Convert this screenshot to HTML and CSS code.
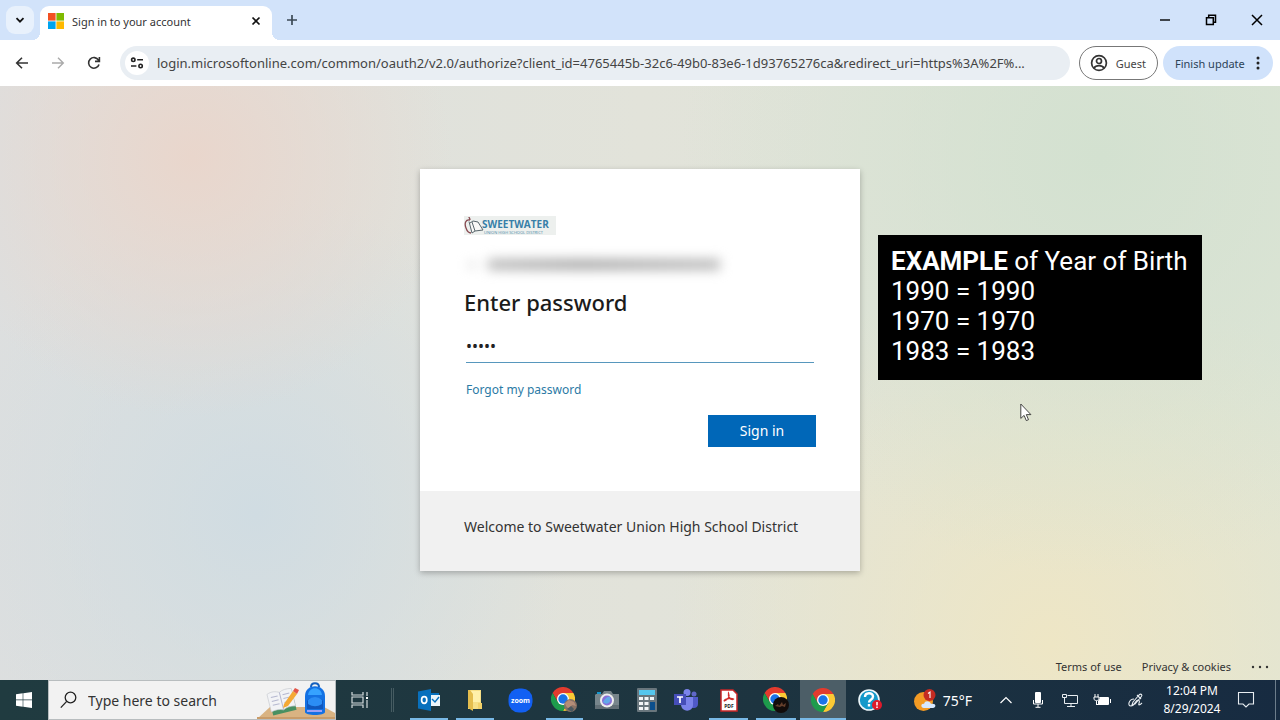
FILE: index.html
```html
<!DOCTYPE html>
<html lang="en">
<head>
<meta charset="utf-8">
<meta name="viewport" content="width=device-width, initial-scale=1">
<title>Sign in to your account</title>
<link rel="stylesheet" href="styles.css">
</head>
<body>
<svg class="defs" aria-hidden="true">
  <symbol id="chrome" viewBox="0 0 24 24">
    <path fill="#e33b2e" d="M1.6 6A12 12 0 0 1 22.4 6H12L6.8 15Z"/>
    <path fill="#fcc934" d="M22.4 6A12 12 0 0 1 12 24L17.2 15 12 6Z"/>
    <path fill="#1e9b4c" d="M12 24A12 12 0 0 1 1.6 6L6.8 15H17.2Z"/>
    <circle cx="12" cy="12" r="6" fill="#fff"/>
    <circle cx="12" cy="12" r="4.7" fill="#1a73e8"/>
  </symbol>
</svg>

<header class="tabstrip">
  <button class="tab-search" aria-label="Search tabs"><svg width="10" height="10" viewBox="0 0 10 10"><path d="M1.5 3.2 5 6.7l3.5-3.5" fill="none" stroke="#111" stroke-width="1.8"/></svg></button>
  <div class="tab">
    <svg width="16" height="16" viewBox="0 0 16 16"><path fill="#f25022" d="M0 0h7.6v7.6H0z"/><path fill="#7fba00" d="M8.4 0H16v7.6H8.4z"/><path fill="#00a4ef" d="M0 8.4h7.6V16H0z"/><path fill="#ffb900" d="M8.4 8.4H16V16H8.4z"/></svg>
    <span class="tab-title">Sign in to your account</span>
    <button class="plain" aria-label="Close tab"><svg width="10" height="10" viewBox="0 0 10 10"><path d="M1.5 1.5l7 7m0-7l-7 7" stroke="#111" stroke-width="1.7"/></svg></button>
  </div>
  <button class="plain new-tab" aria-label="New tab"><svg width="12" height="12" viewBox="0 0 12 12"><path d="M6 1v10M1 6h10" stroke="#3c4a55" stroke-width="1.7"/></svg></button>
  <div class="window-controls">
    <button class="plain" aria-label="Minimize"><svg width="12" height="12" viewBox="0 0 12 12"><path d="M1 6h10" stroke="#000" stroke-width="1.4"/></svg></button>
    <button class="plain" aria-label="Restore"><svg width="12" height="12" viewBox="0 0 12 12"><path d="M1.5 3.7h6.8v6.8H1.5zM3.7 3.7V1.3h6.8v6.9H8.3" fill="none" stroke="#000" stroke-width="1.5"/></svg></button>
    <button class="plain" aria-label="Close"><svg width="12" height="12" viewBox="0 0 12 12"><path d="M1 1l10 10m0-10L1 11" stroke="#000" stroke-width="1.5"/></svg></button>
  </div>
</header>

<nav class="toolbar">
  <button class="plain nav-btn" aria-label="Back"><svg width="14" height="14" viewBox="0 0 14 14"><path d="M13 7H2M7 1.7 1.7 7 7 12.3" fill="none" stroke="#333" stroke-width="1.6"/></svg></button>
  <button class="plain nav-btn" aria-label="Forward"><svg width="14" height="14" viewBox="0 0 14 14"><path d="M1 7h11M7 1.7 12.3 7 7 12.3" fill="none" stroke="#aaa" stroke-width="1.4"/></svg></button>
  <button class="plain nav-btn" aria-label="Reload"><svg width="14" height="14" viewBox="0 0 14 14"><path d="M12 8.4A5.3 5.3 0 1 1 11.5 4.2M12.4 1v4.4H8" fill="none" stroke="#333" stroke-width="1.6"/></svg></button>
  <div class="omnibox">
    <button class="site-info" aria-label="View site information"><svg width="14" height="14" viewBox="0 0 14 14"><g fill="none" stroke="#222" stroke-width="1.6"><circle cx="3.3" cy="3.8" r="1.7"/><path d="M7.2 3.8H13M1 10h5.4"/><circle cx="10.6" cy="10" r="1.7"/></g></svg></button>
    <input class="address" type="text" aria-label="Address" value="login.microsoftonline.com/common/oauth2/v2.0/authorize?client_id=4765445b-32c6-49b0-83e6-1d93765276ca&amp;redirect_uri=https%3A%2F%...">
  </div>
  <button class="pill guest"><svg width="18" height="18" viewBox="0 0 18 18"><g fill="none" stroke="#333" stroke-width="1.7"><circle cx="9" cy="9" r="7.4"/><circle cx="9" cy="7" r="2.5"/><path d="M4 14c2-3.2 8-3.2 10 0"/></g></svg>Guest</button>
  <button class="pill update">Finish update<svg width="4" height="14" viewBox="0 0 4 14"><g fill="#222"><circle cx="2" cy="2" r="1.5"/><circle cx="2" cy="7" r="1.5"/><circle cx="2" cy="12" r="1.5"/></g></svg></button>
</nav>

<main class="page">
  <section class="stage">
    <div class="card">
      <form class="card-body">
        <svg class="brand" width="92" height="19" viewBox="0 0 92 19" role="img" aria-label="Sweetwater Union High School District">
          <path fill="#edf0ee" d="M0 0h92v19H0z"/>
          <path d="M6 4C2 3 0 7 2 12c1 3 3 5 5 5M6 4c0-2-1-2-1-3" fill="none" stroke="#874950" stroke-width="1.3"/>
          <path d="M5 5.500 8 17l3-2 8-1L14 6 9 5 6 7M8 6l3 9" fill="#f8f8f6" stroke="#59666c" stroke-width="1"/>
          <text class="brand-name" x="18" y="12">SWEETWATER</text>
          <text class="brand-sub" x="20" y="18">UNION HIGH SCHOOL DISTRICT</text>
        </svg>
        <div class="account"><span class="account-back"></span><span class="account-name"></span></div>
        <h1><label for="pwd">Enter password</label></h1>
        <input id="pwd" class="password" type="password" value="12345">
        <a class="forgot" href="#">Forgot my password</a>
        <button class="signin" type="submit">Sign in</button>
      </form>
      <div class="card-foot">Welcome to Sweetwater Union High School District</div>
    </div>
  </section>
  <footer class="legal">
    <a href="#">Terms of use</a>
    <a href="#">Privacy &amp; cookies</a>
    <button class="plain" aria-label="More options"><svg width="18" height="4" viewBox="0 0 18 4"><g fill="#333"><circle cx="2" cy="2" r="1.2"/><circle cx="9" cy="2" r="1.2"/><circle cx="16" cy="2" r="1.2"/></g></svg></button>
  </footer>
  <aside class="callout">
    <p><strong>EXAMPLE</strong> of Year of Birth</p>
    <p>1990 = 1990</p>
    <p>1970 = 1970</p>
    <p>1983 = 1983</p>
  </aside>
  <svg class="pointer" width="12" height="19" viewBox="0 0 12 19" aria-hidden="true"><path d="M.8 1v14.4l3.3-3 2.2 5.2 2.2-.9-2.2-5.1h4.6z" fill="#fff" stroke="#333" stroke-width=".9"/></svg>
</main>

<div class="taskbar">
  <button class="plain start" aria-label="Start"><svg width="16" height="16" viewBox="0 0 16 16"><path fill="#fff" d="M0 2.2 6.7 1.3v6.3H0zM7.3 1.2 16 0v7.6H7.3zM0 8.2h6.7v6.5L0 13.8zM7.3 8.2H16V16l-8.7-1.2z"/></svg></button>
  <div class="search">
    <svg width="17" height="18" viewBox="0 0 17 18"><g fill="none" stroke="#222" stroke-width="1.3"><circle cx="10.5" cy="6.5" r="5.3"/><path d="M6.7 10.4.8 16.6"/></g></svg>
    <input type="text" placeholder="Type here to search" aria-label="Type here to search">
    <svg width="78" height="37" viewBox="0 0 78 37" aria-hidden="true">
      <path fill="#d9b382" d="M0 37 13 25h54l11 6v6z"/><path fill="#c99c69" d="M0 35h78v2H0z"/>
      <g transform="rotate(-14 25 19)"><path fill="#489061" d="M13 13h24v18H13z"/><path fill="#f2f3f6" stroke="#c5c8ce" stroke-width=".6" d="M12 9c5-2 9-1 12.500 1C28 8 32 8 37 9v18c-5-1-9-1-12.500 1-4-2-8-2-12.500-1z"/><path d="M24.500 10v18M15 13h7m-7 4h7m-7 4h7m5-8h7m-7 4h7m-7 4h7" stroke="#b5b8d0" stroke-width="1"/></g>
      <path fill="#f4a935" d="m27 22 9-13 4 3-9 12-5 2z"/><path fill="#e25549" d="m36 9 2-3 4 2-2 4z"/>
      <path d="M54 5c0-5 8-5 8 0" fill="none" stroke="#1760bd" stroke-width="2"/>
      <path fill="#1471e3" d="M48 14C48 1 68 1 68 14v16c0 4-20 4-20 0z"/><path fill="#36a2ff" d="M51 13c1-9 13-9 14 0z"/><path fill="#1057bd" d="M50 19c4-5 12-5 16 0v8H50z"/><path fill="#2b8df5" d="M51 18c4-4 10-4 14 0v4c-5 3-9 3-14 0z"/><path d="M50 29h15" stroke="#c8b1ff" stroke-width="1.500"/>
    </svg>
  </div>
  <button class="plain taskview" aria-label="Task view"><svg width="18" height="16" viewBox="0 0 18 16"><path d="M1 0v3h11V0M1 5h11v6H1zM1 16v-3h11v3M16 0v4M16 8v8" fill="none" stroke="#d5dcde" stroke-width="1.200"/><path d="M15 5h2v2h-2z" fill="#fff"/></svg></button>
  <span class="divider"></span>
  <div class="apps">
    <button class="app open" aria-label="Outlook"><svg width="22" height="22" viewBox="0 0 22 22"><path fill="#edf5fa" d="M11 6h11v11H11z"/><path fill="#0870bd" d="m0 2.500 13-2.500v22L0 19.500zM12 4h9v2h-9z"/><ellipse cx="6.200" cy="11" rx="2.600" ry="3.300" fill="none" stroke="#fff" stroke-width="1.700"/><path d="m14 10 3 3 4-5" fill="none" stroke="#0870bd" stroke-width="1.400"/></svg></button>
    <button class="app open" aria-label="File Explorer"><svg width="22" height="22" viewBox="0 0 22 22"><path fill="#f6df86" d="M4 1h13v19H4z"/><path fill="#fff0a9" d="M6 2h10v11H6z"/><path fill="#e4bd4d" d="M4 1h2l3 4v17l-5-3z"/><path fill="#f2d169" d="M14 14h4v6h-4z"/></svg></button>
    <button class="app" aria-label="Zoom"><svg width="25" height="25" viewBox="0 0 25 25"><rect x=".5" y=".5" width="24" height="24" rx="10.500" fill="#1260f3"/><text class="zoom-text" x="12.500" y="15" text-anchor="middle">zoom</text></svg></button>
    <button class="app open" aria-label="Chrome, first profile"><svg width="27" height="26" viewBox="0 0 27 26"><use href="#chrome" width="24" height="24"/><circle cx="19.500" cy="18.500" r="6.500" fill="#887265"/><path d="m14 16 4-3 5 2 2 4-4-1-3 4-3-3z" fill="#b48d78"/><path d="m16 22 4-3 3 3-2 3z" fill="#4b5960"/></svg></button>
    <button class="app" aria-label="Camera"><svg width="24" height="20" viewBox="0 0 24 20"><path fill="#77858b" d="M1 4h6l2-3h7l2 3h6v15H0V5z"/><path fill="#626f76" d="M0 15h24v4H0z"/><path fill="#1496ce" d="M2 2h4v2H2z"/><circle cx="12" cy="10.500" r="7" fill="#eee"/><circle cx="12" cy="10.500" r="5" fill="#8870d7"/><path d="M8 12c2-4 5-6 7-5 2 5-3 9-7 5z" fill="#62a9e9"/></svg></button>
    <button class="app" aria-label="Calculator"><svg width="20" height="24" viewBox="0 0 20 24"><rect width="20" height="24" rx="1" fill="#69767d"/><path fill="#55c6ed" d="M2 2h16v5H2z"/><path fill="#f2f5f7" d="M2 9h4v3H2zm5.500 0h4v3h-4zM13 9h4v3h-4zM2 14h4v3H2zm5.500 0h4v3h-4zM2 19h4v3H2zm5.500 0h4v3h-4z"/><path fill="#0c4f8c" d="M13 14h5v8h-5z"/></svg></button>
    <button class="app" aria-label="Teams"><svg width="24" height="22" viewBox="0 0 24 22"><circle cx="20" cy="5" r="2.500" fill="#6067c7"/><circle cx="13" cy="3.500" r="3.500" fill="#7b83eb"/><path fill="#5059c9" d="M16 8h8v7c0 5-6 5-8 2z"/><path fill="#7b83eb" d="M7 8h12v8c0 7-11 8-12 0z"/><path fill="#464eb8" d="M0 5h12v11H0z"/><path d="M3 8h6M6 8v6" stroke="#fff" stroke-width="1.700"/></svg></button>
    <button class="app open" aria-label="PDF reader"><svg width="18" height="23" viewBox="0 0 18 23"><path d="M1 1h12l4 4v17H1z" fill="#fff" stroke="#c92627" stroke-width="1.500"/><path d="M8.500 4c2 4-2 7-4 8-2-1 6-4 9-2-2 2-6-2-5-6z" fill="none" stroke="#d12d2b" stroke-width="1.300"/><text class="pdf-text" x="9" y="19" text-anchor="middle">PDF</text></svg></button>
    <button class="app open" aria-label="Chrome, second profile"><svg width="27" height="26" viewBox="0 0 27 26"><use href="#chrome" width="24" height="24"/><circle cx="18" cy="18" r="8" fill="#120c0b"/><path d="m12 19 3-2 1 2 3-4 1 3 3-2-1 4-3-1-2 1z" fill="#653f2c"/></svg></button>
    <button class="app open active" aria-label="Chrome"><svg width="24" height="24" viewBox="0 0 24 24"><use href="#chrome"/></svg></button>
    <button class="app" aria-label="Help"><svg width="24" height="22" viewBox="0 0 24 22"><circle cx="11" cy="11" r="10" fill="#1499ca" stroke="#eef8fb" stroke-width="1.600"/><path d="M7 8c0-5 8-5 8-.500 0 3.500-4 3-4 6M11 15v2.500" fill="none" stroke="#fff" stroke-width="2.400"/><circle cx="19" cy="16" r="5" fill="#e01a2b"/><path d="M19 13v3.500m0 1v1.500" stroke="#fff" stroke-width="1.500"/></svg></button>
  </div>
  <div class="tray">
    <button class="plain weather"><svg width="23" height="23" viewBox="0 0 23 23"><circle cx="10.500" cy="12.500" r="9.500" fill="#f39b24"/><path d="M11 19c-4 0-3-5 0-4 1-4 6-3 7 0 6-1 5 4 2 4z" fill="#d7e9ff"/><circle cx="16.500" cy="6" r="6" fill="#c42b22"/><path d="m15 4.500 2-1.500v6" fill="none" stroke="#fff" stroke-width="1.100"/></svg>75°F</button>
    <button class="plain tray-icon" aria-label="Show hidden icons"><svg width="14" height="10" viewBox="0 0 14 10"><path d="m1.500 8 5.500-5.500L12.500 8" fill="none" stroke="#fff" stroke-width="1.200"/></svg></button>
    <button class="plain tray-icon" aria-label="Microphone"><svg width="10" height="16" viewBox="0 0 10 16"><rect x="2" width="6" height="11" rx="1" fill="#fff"/><path d="M.5 8v4h9V8M5 12v3M2.500 15.300h5" fill="none" stroke="#fff"/></svg></button>
    <button class="plain tray-icon" aria-label="Network"><svg width="18" height="14" viewBox="0 0 18 14"><path d="M6.500 2.500h10v8h-13V7M10 10.500v3m-4 0h8M1.500 1.500h4v3h-4zM3.500 5v5" fill="none" stroke="#e8edf1"/></svg></button>
    <button class="plain tray-icon" aria-label="Battery"><svg width="18" height="12" viewBox="0 0 18 12"><path fill="#fff" d="M7 4h8v6H5V7z"/><path d="M3.500 10.500h12v-7h-9M17.500 5v4M1 3h5v2c0 2-5 2-5 0zM2 0v3m3-3v3M3.500 7v4" fill="none" stroke="#fff"/></svg></button>
    <button class="plain tray-icon ink" aria-label="Windows Ink"><svg width="16" height="16" viewBox="0 0 16 16"><path d="M5 10 11 3c2-2 4 0 2 2l-6 7-3 1zM9 3l4 4M6 7C1 7-1 14 3 14s4-6 7-6 0 5 1 5 2-1 3-2" fill="none" stroke="#e8edf1" stroke-width="1.100"/></svg></button>
    <button class="plain clock"><time>12:04 PM</time><time>8/29/2024</time></button>
    <button class="plain notices" aria-label="Notifications"><svg width="18" height="18" viewBox="0 0 18 18"><path d="M1.500 1.500h15V13H12l-3 3-3-3H1.500z" fill="none" stroke="#e8edf1" stroke-width="1.100"/></svg></button>
    <span class="peek"></span>
  </div>
</div>
</body>
</html>
```

FILE: styles.css
```css
* { box-sizing: border-box; }
body {
  margin: 0;
  min-height: 100vh;
  display: flex;
  flex-direction: column;
  background: #fff;
  color: #222;
  font-family: "Noto Sans", "Open Sans", sans-serif;
  font-size: 11px;
}
button, input { font: inherit; color: inherit; }
button { cursor: pointer; }
a { color: inherit; text-decoration: none; }
svg { display: block; flex: none; }
.defs { position: absolute; width: 0; height: 0; }
.plain {
  display: flex;
  align-items: center;
  justify-content: center;
  padding: 0;
  border: 0;
  background: none;
}

/* Browser frame */
.tabstrip {
  display: flex;
  height: 40px;
  padding-left: 6px;
  background: #d2e3fa;
}
.tab-search {
  display: flex;
  align-items: center;
  justify-content: center;
  width: 28px;
  height: 28px;
  margin-top: 6px;
  padding: 0;
  border: 0;
  border-radius: 9px;
  background: #e8f1fc;
}
.tab {
  position: relative;
  display: flex;
  align-items: center;
  gap: 8px;
  width: 232px;
  height: 34px;
  margin: 6px 0 0 6px;
  padding: 0 11px 4px 8px;
  border-radius: 9px 9px 0 0;
  background: #fff;
}
.tab::before, .tab::after {
  content: "";
  position: absolute;
  bottom: 0;
  width: 8px;
  height: 8px;
}
.tab::before { left: -8px; background: radial-gradient(circle at 0 0, transparent 8px, #fff 8px); }
.tab::after { right: -8px; background: radial-gradient(circle at 100% 0, transparent 8px, #fff 8px); }
.tab-title { flex: 1; color: #333; white-space: nowrap; }
.new-tab { width: 40px; }
.window-controls { display: flex; margin-left: auto; }
.window-controls .plain { width: 46px; }

.toolbar {
  display: flex;
  align-items: center;
  height: 46px;
  padding: 0 7px 0 4px;
  background: #fff;
}
.nav-btn { width: 36px; height: 36px; }
.omnibox {
  display: flex;
  flex: 1;
  align-items: center;
  gap: 8px;
  min-width: 0;
  height: 34px;
  margin-left: 8px;
  padding: 0 18px 0 5px;
  border-radius: 17px;
  background: #e9eef3;
}
.site-info {
  display: flex;
  align-items: center;
  justify-content: center;
  width: 24px;
  height: 24px;
  padding: 0;
  border: 0;
  border-radius: 12px;
  background: #fff;
}
.address {
  flex: 1;
  min-width: 0;
  padding: 0;
  border: 0;
  outline: 0;
  background: none;
  color: #444;
  font-size: 13px;
}
.pill {
  display: flex;
  align-items: center;
  justify-content: space-between;
  height: 34px;
  border-radius: 17px;
  color: #444;
  white-space: nowrap;
}
.guest {
  width: 79px;
  margin-left: 9px;
  padding: 0 11px 0 10px;
  border: 1px solid #777;
  background: #fff;
}
.update {
  width: 110px;
  margin-left: 5px;
  padding: 0 13px 0 12px;
  border: 0;
  background: #d0e2fb;
  color: #2c4257;
}

/* Sign-in page */
.page {
  position: relative;
  display: flex;
  flex: 1;
  flex-direction: column;
  background:
    radial-gradient(circle at 15% 12%, #e9d6cc 0, #e9d6cc00 260px),
    radial-gradient(circle at 86% 12%, #d3e1d0 0, #d3e1d000 420px),
    radial-gradient(circle at 20% 72%, #d0dce2 0, #d0dce200 320px),
    radial-gradient(circle at 82% 94%, #eee6c5 0, #eee6c500 380px),
    linear-gradient(90deg, #dddfdf, #e2e3da 50%, #dfe5d7);
}
.stage {
  display: flex;
  flex: 1;
  align-items: center;
  justify-content: center;
}
.card {
  width: 440px;
  background: #fff;
  box-shadow: 0 2px 6px #0004;
}
.card-body {
  display: flex;
  flex-direction: column;
  padding: 47px 44px 44px;
}
.brand-name { font: bold 10px "Open Sans", sans-serif; fill: #377fa8; }
.brand-sub { font: 4px "Open Sans", sans-serif; fill: #4c8ba9; }
.account {
  position: relative;
  display: flex;
  align-items: center;
  gap: 12px;
  height: 30px;
  margin-top: 15px;
  padding-left: 4px;
  filter: blur(6px);
}
.account-back { width: 8px; height: 4px; background: #ccc; }
.account-name {
  width: 232px;
  height: 11px;
  background: linear-gradient(90deg, #bbb, #aaa 40%, #bbb);
}
h1 {
  margin: 5px 0 0;
  color: #1b1b1b;
  font-size: 22px;
  font-weight: 500;
  line-height: 34px;
}
.password {
  height: 36px;
  margin: 8px 2px 0;
  padding: 4px 0 0;
  border: 0;
  border-bottom: 1px solid #5797bd;
  outline: 0;
  background: none;
  font-size: 16px;
}
.forgot {
  align-self: flex-start;
  margin: 17px 2px 0;
  color: #2b7aa5;
  font-size: 12px;
  line-height: 20px;
}
.signin {
  align-self: flex-end;
  width: 108px;
  height: 32px;
  margin-top: 15px;
  padding: 0;
  border: 0;
  background: #0067b8;
  color: #fff;
  font-size: 14px;
}
.card-foot {
  padding: 24px 44px 32px;
  background: #f1f1f1;
  color: #333;
  font-size: 14px;
  line-height: 24px;
}
.legal {
  display: flex;
  align-items: center;
  justify-content: flex-end;
  gap: 20px;
  height: 27px;
  padding-right: 11px;
  color: #333;
}
.callout {
  position: absolute;
  top: 149px;
  left: 878px;
  width: 324px;
  height: 145px;
  padding: 11px 13px;
  background: #000;
  color: #fff;
  font: 26px/30px Roboto, sans-serif;
  white-space: nowrap;
}
.callout p { margin: 0; }
.pointer { position: absolute; top: 317px; left: 1020px; }

/* Taskbar */
.taskbar {
  display: flex;
  height: 40px;
  background: linear-gradient(90deg, #203b40, #1d3440 60%, #172b41);
  color: #fff;
}
.start { width: 48px; }
.search {
  display: flex;
  align-items: center;
  gap: 11px;
  width: 288px;
  padding-left: 11px;
  border: 1px solid #b8bdbf;
  background: #f2f2f2;
  color: #333;
}
.search input {
  flex: 1;
  min-width: 0;
  padding: 0;
  border: 0;
  outline: 0;
  background: none;
  font-size: 14px;
}
.search input::placeholder { color: #333; opacity: 1; }
.taskview { width: 48px; }
.divider { align-self: center; width: 3px; height: 24px; margin: 0 12px 0 7px; border: solid #465c62; border-width: 0 1px; }
.apps { display: grid; grid-template-columns: 46px 46px 44px 45px 40px 40px 38px 47px 48px 46px 48px; }
.app {
  position: relative;
  display: flex;
  align-items: center;
  justify-content: center;
  padding: 0;
  border: 0;
  background: none;
}
.app.active { background: #4c5e67; }
.open::after {
  content: "";
  position: absolute;
  right: 4px;
  bottom: 0;
  left: 4px;
  height: 2px;
  background: #79b9e6;
}
.open.active::after { right: 0; left: 0; }
.zoom-text { font: bold 7px "Open Sans", sans-serif; fill: #fff; }
.pdf-text { font: bold 5px "Open Sans", sans-serif; fill: #222; }
.tray { display: flex; margin-left: auto; }
.weather { gap: 7px; margin-right: 18px; font-size: 14px; }
.tray-icon { width: 32px; }
.ink { width: 36px; }
.clock {
  flex-direction: column;
  width: 76px;
  font-size: 12px;
  line-height: 18px;
}
.notices { width: 32px; }
.peek { width: 5px; margin-left: 13px; border-left: 1px solid #6c7d8b; }
```
